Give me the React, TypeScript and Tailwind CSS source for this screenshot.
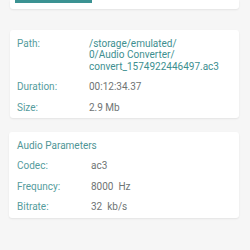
import React from "react";

const Row = ({ label, children, valueClass, labelW }: { label: string; children: React.ReactNode; valueClass: string; labelW: string }) => (
  <div className="flex py-[4.5px] leading-[11.5px]">
    <div className={`${labelW} shrink-0 text-[#559c9d]`}>{label}</div>
    <div className={valueClass}>{children}</div>
  </div>
);

export default function App() {
  return (
    <div
      className="w-[250px] h-[250px] overflow-hidden bg-[#f6f6f6] text-[10px]"
      style={{ fontFamily: "Roboto, 'Noto Sans', sans-serif" }}
    >
      <div className="mx-[10px] w-[229px] h-[9px] bg-white rounded-b-[3px] shadow-[0_1px_2px_rgba(0,0,0,0.08)] pl-[5px]">
        <div className="w-[77px] h-[3px] bg-[#3b9292]" />
      </div>
      <div className="mt-[21px] mx-[10px] w-[229px] bg-white rounded-[3px] shadow-[0_1px_2px_rgba(0,0,0,0.08)] pt-[3px] pl-[7px] pr-[6px]">
        <Row label="Path:" labelW="w-[72px]" valueClass="text-[#3d8f90]">
          /storage/emulated/
          <br />
          0/Audio Converter/
          <br />
          convert_1574922446497.ac3
        </Row>
        <Row label="Duration:" labelW="w-[72px]" valueClass="text-[#6f7474]">
          00:12:34.37
        </Row>
        <Row label="Size:" labelW="w-[72px]" valueClass="text-[#6f7474]">
          2.9 Mb
        </Row>
      </div>
      <div className="mt-[14.5px] mx-[9px] w-[230px] bg-white rounded-[3px] shadow-[0_1px_2px_rgba(0,0,0,0.08)] pt-[3px] pb-[1px] pl-[8px]">
        <div className="py-[4.5px] leading-[11.5px] text-[#4f9596]">Audio Parameters</div>
        <Row label="Codec:" labelW="w-[74px]" valueClass="text-[#6f7474]">
          ac3
        </Row>
        <Row label="Frequncy:" labelW="w-[74px]" valueClass="text-[#6f7474] whitespace-pre">
          {"8000  Hz"}
        </Row>
        <Row label="Bitrate:" labelW="w-[74px]" valueClass="text-[#6f7474] whitespace-pre">
          {"32  kb/s"}
        </Row>
      </div>
    </div>
  );
}
